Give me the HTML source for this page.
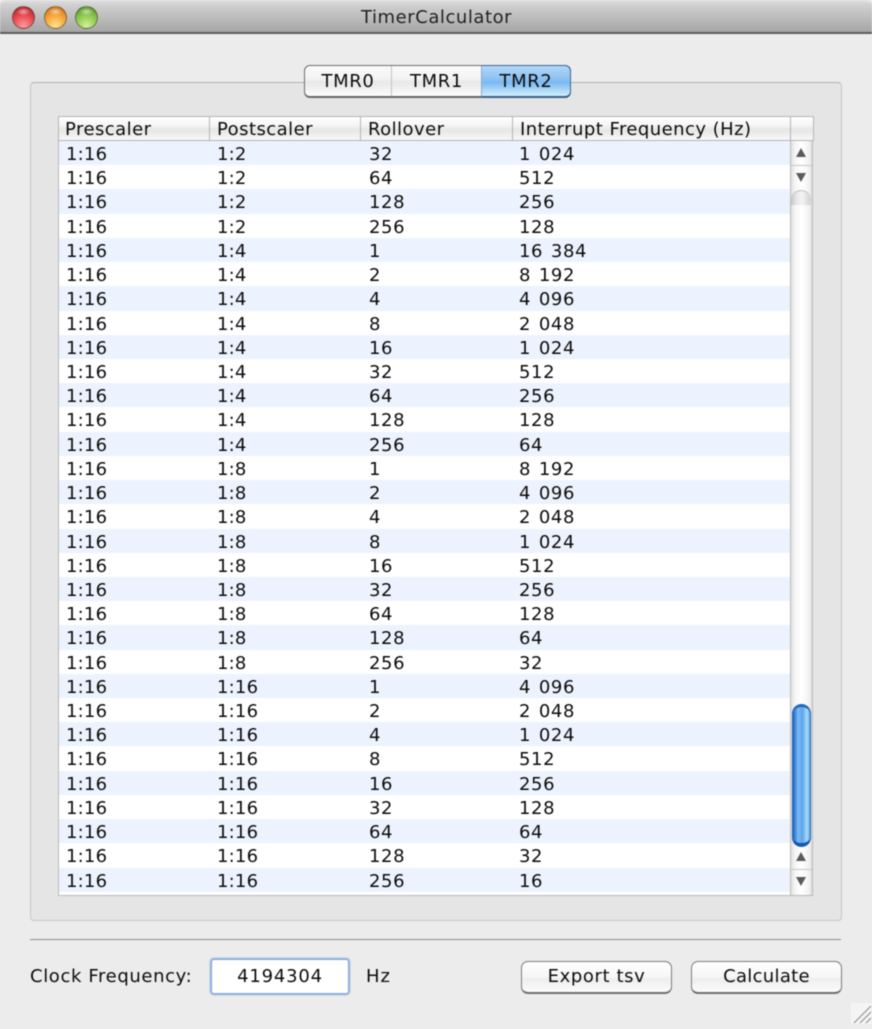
<!DOCTYPE html>
<html><head><meta charset="utf-8"><title>TimerCalculator</title>
<style>
html,body{margin:0;padding:0}
body{width:872px;height:1024px;overflow:hidden;position:relative;background:#ececec;font-family:"DejaVu Sans","Liberation Sans",sans-serif;font-size:18px;color:#0c0c0c}
#all{position:absolute;left:0;top:0;width:872px;height:1024px;filter:blur(.5px)}
.a{position:absolute;white-space:nowrap}
#bar{left:0;top:0;width:872px;height:32px;background:linear-gradient(#e2e2e2,#d0d0d0 15%,#a6a6a6);border-bottom:2px solid #5c5c5c;border-radius:6px 6px 0 0}
.dot{position:absolute;top:6px;width:21px;height:21px;border-radius:50%;border:.5px solid rgba(70,70,70,.6)}
#box{left:30px;top:82px;width:810px;height:837px;background:#e5e5e5;border:1px solid #c6c6c6;border-top-color:#b0b0b0;border-radius:4px}
#hd{left:58px;top:116px;height:23px;background:linear-gradient(#fff 0,#f6f6f6 35%,#e6e6e6 55%,#f8f8f8);border:1px solid #b4b4b4;box-sizing:content-box;width:754px}
.dv{position:absolute;top:116px;width:1px;height:24px;background:#b4b4b4}
.h{position:absolute;top:119px;line-height:22px;letter-spacing:.45px}
#tb{left:58px;top:140px;width:755px;height:756px;background:#fff;box-sizing:border-box;border:1px solid #b8b8b8;border-top:1px solid #b4b4b4}
#rows{position:absolute;left:0;top:0;width:732px}
.r{height:24.233px;line-height:24.233px;position:relative;font-size:18px}
.r:nth-child(odd){background:#edf3fe}
.r span{position:absolute;top:2px}
.r span:nth-child(1){left:7px;letter-spacing:.2px}
.r span:nth-child(2){left:158px;letter-spacing:.2px}
.r span:nth-child(3){left:310px;letter-spacing:.6px}
.r span:nth-child(4){left:460px;letter-spacing:.6px;word-spacing:1.5px}
#sb{left:790px;top:141px;width:22px;height:754px;background:linear-gradient(90deg,#e0e0e0,#f6f6f6 20%,#fff 50%,#f2f2f2 85%,#ddd);border-left:1px solid #bdbdbd;box-sizing:border-box}
.arr{position:absolute;width:0;height:0;left:5px;border-left:5.5px solid transparent;border-right:5.5px solid transparent}
.up{border-bottom:9px solid #5a5a5a}
.dn{border-top:9px solid #5a5a5a}
#thumb{left:792px;top:704px;width:19px;height:143px;box-sizing:border-box;border-radius:10px;background:linear-gradient(90deg,#1f62bd,#3f8de4 14%,#7cbaf2 30%,#5aa4ec 55%,#a9daf9 82%,#5ea6e4);border:1px solid #2664ad;border-top:3px solid #1f68bd;border-bottom:4px solid #1459ad}
#cap{left:791px;top:190px;width:20px;height:14px;border-radius:10px 10px 0 0;background:linear-gradient(90deg,#c4c4c4,#e4e4e4 25%,#f4f4f4 55%,#d0d0d0);border-top:1px solid #bbb}
.seg{position:absolute;top:67px;height:30px;line-height:29px;text-align:center;box-sizing:border-box;letter-spacing:.6px}
#tabs{left:304px;top:65px;width:267px;height:33px;box-sizing:border-box;border:1px solid #6e6e6e;border-bottom:2px solid #666;border-radius:6px;background:linear-gradient(#fafafa,#f4f4f4 40%,#e8e8e8 55%,#fcfcfc);overflow:hidden}
.btn{position:absolute;top:961px;height:33px;box-sizing:border-box;border:1px solid #7c7c7c;border-bottom:2px solid #6e6e6e;border-radius:7px;background:linear-gradient(#fff,#f6f6f6 50%,#eee 55%,#fbfbfb);text-align:center;line-height:29px}
</style></head><body><div id="all">
<div class="a" id="bar"></div>
<div class="dot" style="left:12px;background:radial-gradient(ellipse 7px 4px at 50% 22%,rgba(255,255,255,.55),transparent),radial-gradient(circle at 50% 90%,#ff9a9a 0,#e84a4f 50%,#a81620 100%)"></div>
<div class="dot" style="left:44px;background:radial-gradient(ellipse 7px 4px at 50% 22%,rgba(255,255,255,.55),transparent),radial-gradient(circle at 50% 90%,#ffe38a 0,#f4a63a 50%,#c4650f 100%)"></div>
<div class="dot" style="left:75px;background:radial-gradient(ellipse 7px 4px at 50% 22%,rgba(255,255,255,.55),transparent),radial-gradient(circle at 50% 90%,#d2f19a 0,#90c84e 50%,#4c8a20 100%)"></div>
<div class="a" style="left:361px;top:6px;line-height:24px;letter-spacing:.55px;color:#222">TimerCalculator</div>

<div class="a" id="box"></div>

<div class="a" id="tabs"></div>
<div class="a" style="left:482px;top:66px;width:88px;height:30px;border-radius:0 5px 5px 0;background:linear-gradient(#b2d7f7,#93c6f3 35%,#7cb9f1 55%,#d0effd)"></div>
<div class="a" style="left:482px;top:65px;width:89px;height:33px;box-sizing:border-box;border:1px solid #3f6692;border-bottom:2px solid #3a5f88;border-left:0;border-radius:0 6px 6px 0"></div>
<div class="a" style="left:391px;top:66px;width:1px;height:30px;background:#c2c2c2"></div>
<div class="a" style="left:481px;top:66px;width:1px;height:30px;background:#8aa9cc"></div>
<div class="a seg" style="left:305px;width:86px">TMR0</div>
<div class="a seg" style="left:392px;width:89px">TMR1</div>
<div class="a seg" style="left:482px;width:88px">TMR2</div>

<div class="a" id="tb"><div id="rows">
<div class="r"><span>1:16</span><span>1:2</span><span>32</span><span>1 024</span></div>
<div class="r"><span>1:16</span><span>1:2</span><span>64</span><span>512</span></div>
<div class="r"><span>1:16</span><span>1:2</span><span>128</span><span>256</span></div>
<div class="r"><span>1:16</span><span>1:2</span><span>256</span><span>128</span></div>
<div class="r"><span>1:16</span><span>1:4</span><span>1</span><span>16 384</span></div>
<div class="r"><span>1:16</span><span>1:4</span><span>2</span><span>8 192</span></div>
<div class="r"><span>1:16</span><span>1:4</span><span>4</span><span>4 096</span></div>
<div class="r"><span>1:16</span><span>1:4</span><span>8</span><span>2 048</span></div>
<div class="r"><span>1:16</span><span>1:4</span><span>16</span><span>1 024</span></div>
<div class="r"><span>1:16</span><span>1:4</span><span>32</span><span>512</span></div>
<div class="r"><span>1:16</span><span>1:4</span><span>64</span><span>256</span></div>
<div class="r"><span>1:16</span><span>1:4</span><span>128</span><span>128</span></div>
<div class="r"><span>1:16</span><span>1:4</span><span>256</span><span>64</span></div>
<div class="r"><span>1:16</span><span>1:8</span><span>1</span><span>8 192</span></div>
<div class="r"><span>1:16</span><span>1:8</span><span>2</span><span>4 096</span></div>
<div class="r"><span>1:16</span><span>1:8</span><span>4</span><span>2 048</span></div>
<div class="r"><span>1:16</span><span>1:8</span><span>8</span><span>1 024</span></div>
<div class="r"><span>1:16</span><span>1:8</span><span>16</span><span>512</span></div>
<div class="r"><span>1:16</span><span>1:8</span><span>32</span><span>256</span></div>
<div class="r"><span>1:16</span><span>1:8</span><span>64</span><span>128</span></div>
<div class="r"><span>1:16</span><span>1:8</span><span>128</span><span>64</span></div>
<div class="r"><span>1:16</span><span>1:8</span><span>256</span><span>32</span></div>
<div class="r"><span>1:16</span><span>1:16</span><span>1</span><span>4 096</span></div>
<div class="r"><span>1:16</span><span>1:16</span><span>2</span><span>2 048</span></div>
<div class="r"><span>1:16</span><span>1:16</span><span>4</span><span>1 024</span></div>
<div class="r"><span>1:16</span><span>1:16</span><span>8</span><span>512</span></div>
<div class="r"><span>1:16</span><span>1:16</span><span>16</span><span>256</span></div>
<div class="r"><span>1:16</span><span>1:16</span><span>32</span><span>128</span></div>
<div class="r"><span>1:16</span><span>1:16</span><span>64</span><span>64</span></div>
<div class="r"><span>1:16</span><span>1:16</span><span>128</span><span>32</span></div>
<div class="r"><span>1:16</span><span>1:16</span><span>256</span><span>16</span></div>
</div></div>

<div class="a" id="hd"></div>
<div class="dv" style="left:209px"></div>
<div class="dv" style="left:360px"></div>
<div class="dv" style="left:512px"></div>
<div class="dv" style="left:790px"></div>
<div class="h" style="left:65px">Prescaler</div>
<div class="h" style="left:217px">Postscaler</div>
<div class="h" style="left:368px">Rollover</div>
<div class="h" style="left:520px">Interrupt Frequency (Hz)</div>

<div class="a" id="sb">
<div class="arr up" style="top:7px"></div>
<div style="position:absolute;left:0;top:24px;width:21px;height:1px;background:#c8c8c8"></div>
<div class="arr dn" style="top:32px"></div>
<div class="arr up" style="top:711px"></div>
<div style="position:absolute;left:0;top:728px;width:21px;height:1px;background:#c8c8c8"></div>
<div class="arr dn" style="top:736px"></div>
</div>
<div class="a" id="cap"></div>
<div class="a" id="thumb"></div>

<div class="a" style="left:30px;top:939px;width:811px;height:1px;background:#8c8c8c"></div>
<div class="a" style="left:30px;top:963px;line-height:28px;letter-spacing:.62px">Clock Frequency:</div>
<div class="a" style="left:212px;top:960px;width:136px;height:33px;box-sizing:border-box;background:#fff;box-shadow:0 0 1.5px 2px #7fa8d8;border-radius:2px;text-align:center;line-height:33px;letter-spacing:.8px">4194304</div>
<div class="a" style="left:366px;top:963px;line-height:28px;letter-spacing:1px">Hz</div>
<div class="btn" style="left:521px;width:151px;letter-spacing:.6px">Export tsv</div>
<div class="btn" style="left:691px;width:151px;letter-spacing:.3px">Calculate</div>
<div class="a" style="left:851px;top:1003px;width:21px;height:21px;background:#f4f4f4">
<svg width="21" height="21" viewBox="0 0 21 21"><path d="M3 20L20 3M9 20L20 9M15 20L20 15" stroke="#8a8a8a" stroke-width="1" fill="none"/></svg></div>
</div></body></html>
